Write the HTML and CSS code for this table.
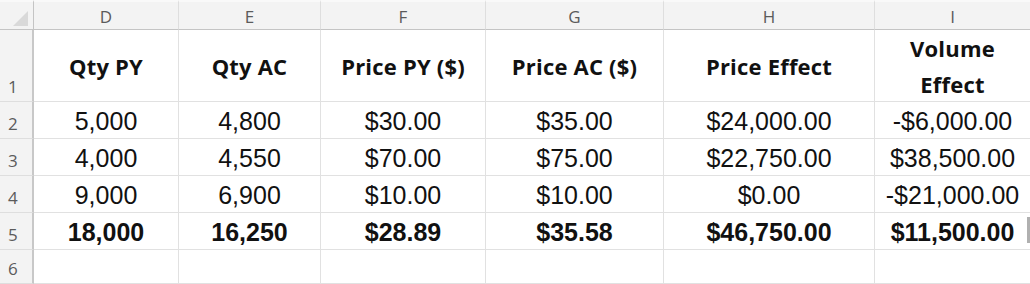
FILE: index.html
```html
<!DOCTYPE html>
<html>
<head>
<meta charset="utf-8">
<link rel="stylesheet" href="styles.css">
</head>
<body>
<div class="sheet">
  <div class="corner"><span class="tri"></span></div>
  <div class="colhead">D</div>
  <div class="colhead">E</div>
  <div class="colhead">F</div>
  <div class="colhead">G</div>
  <div class="colhead">H</div>
  <div class="colhead last">I</div>

  <div class="rowhead">1</div>
  <div class="cell head">Qty PY</div>
  <div class="cell head">Qty AC</div>
  <div class="cell head">Price PY ($)</div>
  <div class="cell head">Price AC ($)</div>
  <div class="cell head">Price Effect</div>
  <div class="cell head last">Volume<br>Effect</div>

  <div class="rowhead">2</div>
  <div class="cell">5,000</div>
  <div class="cell">4,800</div>
  <div class="cell">$30.00</div>
  <div class="cell">$35.00</div>
  <div class="cell">$24,000.00</div>
  <div class="cell last">-$6,000.00</div>

  <div class="rowhead">3</div>
  <div class="cell">4,000</div>
  <div class="cell">4,550</div>
  <div class="cell">$70.00</div>
  <div class="cell">$75.00</div>
  <div class="cell">$22,750.00</div>
  <div class="cell last">$38,500.00</div>

  <div class="rowhead">4</div>
  <div class="cell">9,000</div>
  <div class="cell">6,900</div>
  <div class="cell">$10.00</div>
  <div class="cell">$10.00</div>
  <div class="cell">$0.00</div>
  <div class="cell last">-$21,000.00</div>

  <div class="rowhead">5</div>
  <div class="cell total">18,000</div>
  <div class="cell total">16,250</div>
  <div class="cell total">$28.89</div>
  <div class="cell total">$35.58</div>
  <div class="cell total">$46,750.00</div>
  <div class="cell total last edge">$11,500.00</div>

  <div class="rowhead">6</div>
  <div class="cell"></div>
  <div class="cell"></div>
  <div class="cell"></div>
  <div class="cell"></div>
  <div class="cell"></div>
  <div class="cell last"></div>
</div>
</body>
</html>
```

FILE: styles.css
```css
html, body {
  margin: 0;
  padding: 0;
  background: #ffffff;
}

.sheet {
  width: 1030px;
  height: 284px;
  overflow: hidden;
  display: grid;
  grid-template-columns: 34px 145px 142px 165px 178px 211px 1fr;
  grid-template-rows: 30px 72px 37px 37px 37px 37px 1fr;
  font-family: "Liberation Sans", Arial, sans-serif;
  color: #111111;
}

.corner,
.colhead {
  background: #f3f3f3;
  border-top: 2px solid #f9f9f9;
  border-bottom: 1px solid #c4c4c4;
  box-sizing: border-box;
}

.corner {
  border-right: 1px solid #c4c4c4;
  position: relative;
}

.tri {
  position: absolute;
  right: 5px;
  bottom: 3px;
  width: 0;
  height: 0;
  border-left: 15px solid transparent;
  border-bottom: 15px solid #d9d9d9;
}

.colhead {
  border-right: 1px solid #dedede;
  display: flex;
  align-items: center;
  justify-content: center;
  font-family: "Open Sans", "Noto Sans", sans-serif;
  font-size: 17px;
  color: #5b5b5b;
  padding-top: 1px;
}

.colhead.last {
  border-right: none;
}

.rowhead {
  background: #f3f3f3;
  border-right: 2px solid #c8c8c8;
  border-bottom: 1px solid #dedede;
  box-sizing: border-box;
  display: flex;
  align-items: flex-end;
  padding: 0 0 4px 8px;
  font-family: "Open Sans", "Noto Sans", sans-serif;
  font-size: 17px;
  line-height: 20px;
  color: #5b5b5b;
}

.cell {
  border-right: 1px solid #e1e1e1;
  border-bottom: 1px solid #e1e1e1;
  box-sizing: border-box;
  display: flex;
  align-items: flex-end;
  justify-content: center;
  text-align: center;
  font-size: 25px;
  line-height: 28px;
  padding-bottom: 3px;
  white-space: nowrap;
}

.cell.last {
  border-right: none;
}

.cell.head {
  align-items: center;
  padding-bottom: 0;
  font-family: "Open Sans", "Noto Sans", sans-serif;
  font-weight: 700;
  font-size: 22px;
  line-height: 36px;
  letter-spacing: 0.2px;
  color: #111111;
}

.cell.total {
  font-weight: 700;
}

.cell.edge {
  position: relative;
}

.cell.edge::after {
  content: "";
  position: absolute;
  right: 0;
  top: 4px;
  bottom: 6px;
  width: 3px;
  background: #b0b0b0;
}
```
